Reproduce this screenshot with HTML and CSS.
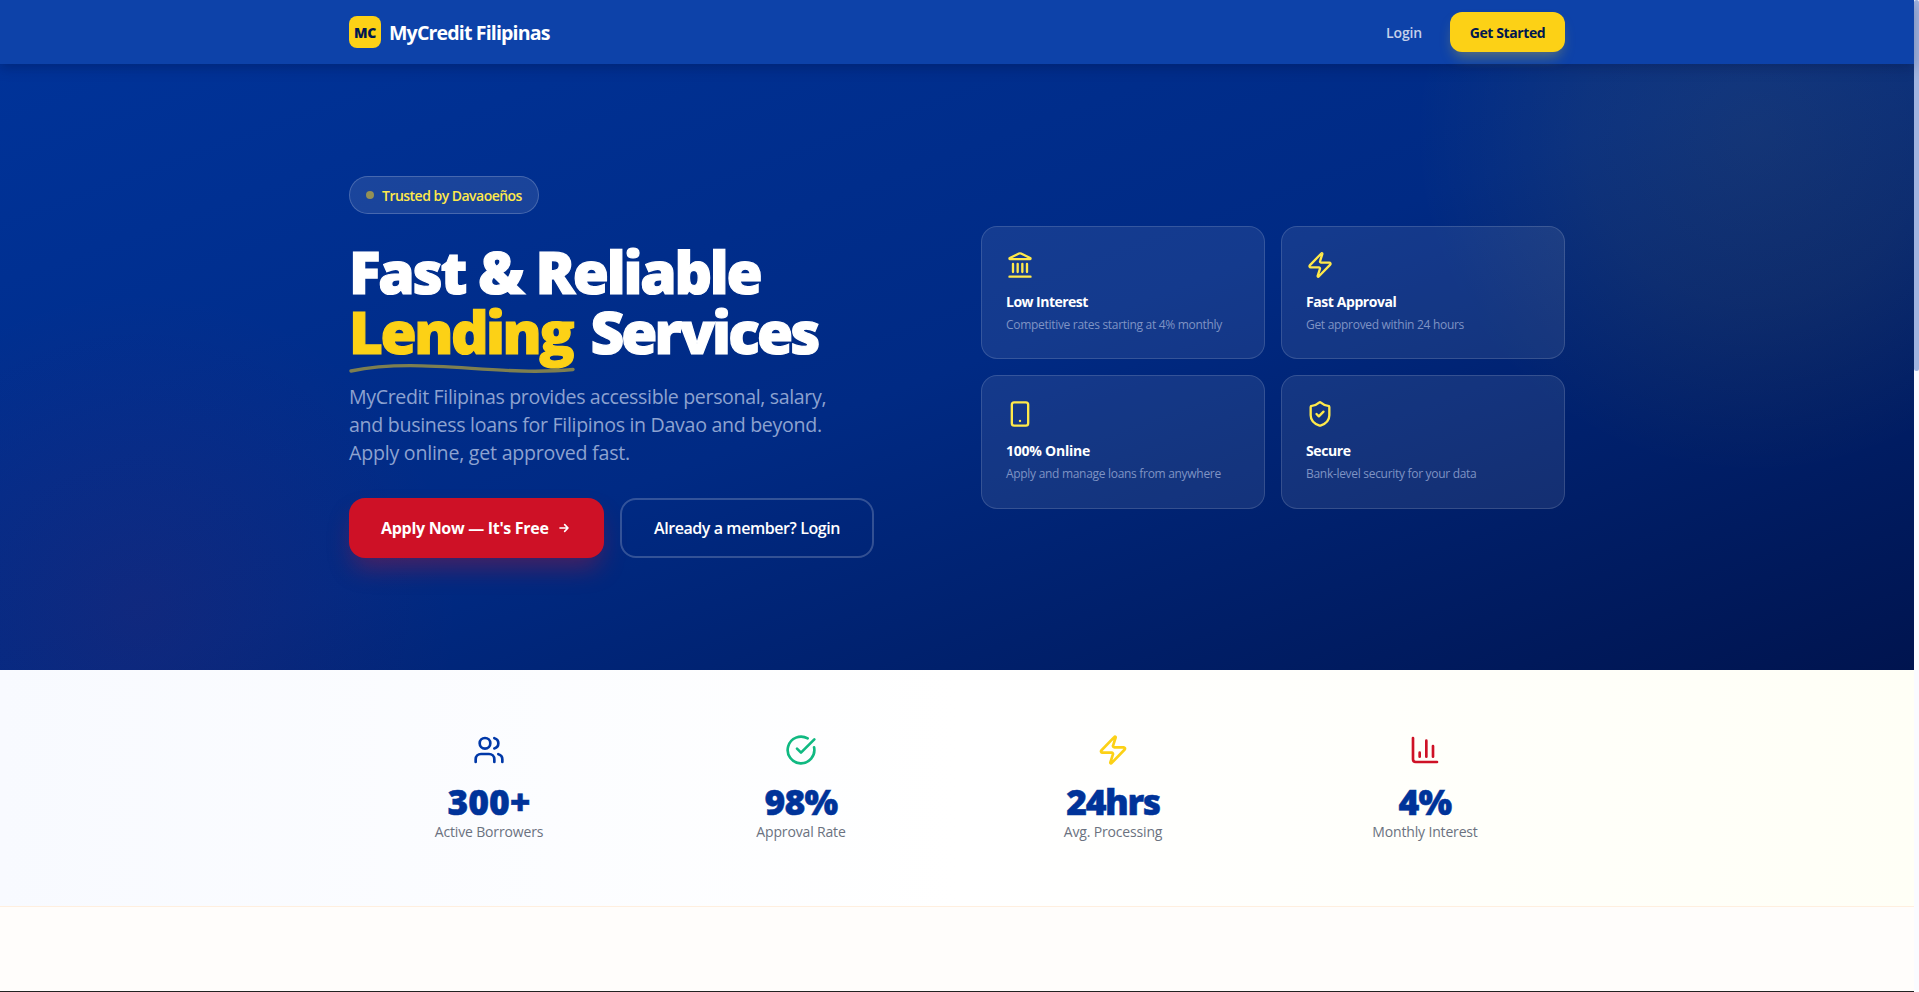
FILE: index.html
```html
<!DOCTYPE html>
<html lang="en">
<head>
<meta charset="utf-8">
<title>MyCredit Filipinas</title>
<link rel="stylesheet" href="styles.css">
</head>
<body>
<div class="page">
  <header class="nav">
    <div class="container nav-inner">
      <a class="brand"><span class="brand-mark">MC</span><span class="brand-name">MyCredit Filipinas</span></a>
      <nav class="nav-links"><a class="login">Login</a><a class="get-started">Get Started</a></nav>
    </div>
  </header>
  <main>
    <section class="hero">
      <div class="glow glow-gold"></div>
      <div class="glow glow-red"></div>
      <div class="container hero-inner">
        <div class="intro">
          <div class="badge"><i class="dot"></i><span>Trusted by Davaoeños</span></div>
          <h1 class="title"><span class="title-top">Fast &amp; Reliable</span><br><span class="lending">Lending<svg class="swoosh" viewBox="0 0 226 12" fill="none"><path d="M2 8C72 -6.5 148 14 224 6.5" stroke="currentColor" stroke-width="3.4" stroke-linecap="round"/></svg></span> <span class="services">Services</span></h1>
          <p class="lead"><span class="lead-1">MyCredit Filipinas provides accessible personal, salary,</span><br><span class="lead-2">and business loans for Filipinos in Davao and beyond.</span><br><span class="lead-3">Apply online, get approved fast.</span></p>
          <div class="actions">
            <a class="btn btn-red"><span>Apply Now — It's Free</span><svg class="arrow" viewBox="0 0 24 24"><path d="M13 7l5 5m0 0l-5 5m5-5H6"/></svg></a>
            <a class="btn btn-outline"><span>Already a member? Login</span></a>
          </div>
        </div>
        <div class="features">
          <article class="card">
            <svg class="card-icon" viewBox="0 0 24 24"><path d="M10 18v-7M11.12 2.198a2 2 0 0 1 1.76.006l7.866 3.847c.476.233.31.949-.22.949H3.474c-.53 0-.695-.716-.22-.949zM14 18v-7M18 18v-7M3 22h18M6 18v-7"/></svg>
            <h3 class="tight">Low Interest</h3><p>Competitive rates starting at 4% monthly</p>
          </article>
          <article class="card">
            <svg class="card-icon" viewBox="0 0 24 24"><path d="M4 14a1 1 0 0 1-.78-1.63l9.9-10.2a.5.5 0 0 1 .86.46l-1.92 6.02A1 1 0 0 0 13 10h7a1 1 0 0 1 .78 1.63l-9.9 10.2a.5.5 0 0 1-.86-.46l1.92-6.02A1 1 0 0 0 11 14z"/></svg>
            <h3>Fast Approval</h3><p>Get approved within 24 hours</p>
          </article>
          <article class="card">
            <svg class="card-icon" viewBox="0 0 24 24"><rect x="5" y="2" width="14" height="20" rx="2"/><path d="M12 18h.01"/></svg>
            <h3 class="loose">100% Online</h3><p>Apply and manage loans from anywhere</p>
          </article>
          <article class="card">
            <svg class="card-icon" viewBox="0 0 24 24"><path d="M20 13c0 5-3.5 7.5-7.66 8.95a1 1 0 0 1-.67-.01C7.5 20.5 4 18 4 13V6a1 1 0 0 1 1-1c2 0 4.5-1.2 6.24-2.72a1.17 1.17 0 0 1 1.52 0C14.51 3.81 17 5 19 5a1 1 0 0 1 1 1z"/><path d="m9 12 2 2 4-4"/></svg>
            <h3>Secure</h3><p>Bank-level security for your data</p>
          </article>
        </div>
      </div>
    </section>
    <section class="stats">
      <div class="container stats-grid">
        <div class="stat"><svg class="stat-icon blue" viewBox="0 0 24 24"><path d="M16 21v-2a4 4 0 0 0-4-4H6a4 4 0 0 0-4 4v2"/><circle cx="9" cy="7" r="4"/><path d="M22 21v-2a4 4 0 0 0-3-3.87M16 3.13a4 4 0 0 1 0 7.75"/></svg><div class="value">300+</div><div class="label">Active Borrowers</div></div>
        <div class="stat"><svg class="stat-icon green" viewBox="0 0 24 24"><path d="M21.801 10A10 10 0 1 1 17 3.335"/><path d="m9 11 3 3L22 4"/></svg><div class="value snug">98%</div><div class="label">Approval Rate</div></div>
        <div class="stat"><svg class="stat-icon gold" viewBox="0 0 24 24"><path d="M4 14a1 1 0 0 1-.78-1.63l9.9-10.2a.5.5 0 0 1 .86.46l-1.92 6.02A1 1 0 0 0 13 10h7a1 1 0 0 1 .78 1.63l-9.9 10.2a.5.5 0 0 1-.86-.46l1.92-6.02A1 1 0 0 0 11 14z"/></svg><div class="value snugger">24hrs</div><div class="label">Avg. Processing</div></div>
        <div class="stat"><svg class="stat-icon red" viewBox="0 0 24 24"><path d="M3 3v16a2 2 0 0 0 2 2h16M18 17V9M13 17V5M8 17v-3"/></svg><div class="value snug">4%</div><div class="label">Monthly Interest</div></div>
      </div>
    </section>
    <section class="next"></section>
  </main>
</div>
<div class="scrollbar"><div class="thumb"></div></div>
</body>
</html>
```
FILE: styles.css
```css
* { box-sizing: border-box; }
body {
  margin: 0;
  display: flex;
  height: 992px;
  overflow: hidden;
  font-family: "Open Sans", "Noto Sans", sans-serif;
  background: #fffdfb;
  color: #fff;
  white-space: nowrap;
}
svg { display: block; }
.page { width: 1914px; display: flex; flex-direction: column; }
main { display: flex; flex-direction: column; flex: 1; }
.container { width: 1280px; margin: 0 auto; padding: 0 32px; }

.nav { position: relative; z-index: 2; height: 64px; background: #0d42a9; box-shadow: 0 4px 12px rgba(0, 10, 50, .28); }
.nav-inner { height: 64px; display: flex; align-items: center; justify-content: space-between; }
.brand { display: flex; align-items: center; gap: 8px; }
.brand-mark { width: 32px; height: 32px; border-radius: 8px; background: #fcd116; color: #00174f; display: grid; place-items: center; font-size: 14px; font-weight: 800; letter-spacing: -.4px; }
.brand-name { font-size: 19.6px; font-weight: 700; letter-spacing: -.86px; }
.nav-links { display: flex; align-items: center; gap: 28px; }
.login { font-size: 14px; font-weight: 600; letter-spacing: -.15px; color: #c4d0ea; }
.get-started { width: 115px; height: 40px; border-radius: 12px; background: #fcd116; color: #00174f; display: grid; place-items: center; font-size: 14px; font-weight: 700; letter-spacing: -.4px; box-shadow: 0 8px 14px -4px rgba(252, 209, 22, .35); }

.hero { position: relative; overflow: hidden; height: 606px; padding: 112px 0; background: linear-gradient(160deg, #003399 0%, #002a84 50%, #00144f 100%); }
.glow { position: absolute; border-radius: 50%; }
.glow-gold { width: 680px; height: 680px; right: -180px; top: -270px; background: radial-gradient(closest-side, rgba(252, 209, 22, .08), rgba(252, 209, 22, .055) 50%, rgba(252, 209, 22, 0)); }
.glow-red { width: 640px; height: 640px; left: -180px; bottom: -260px; background: radial-gradient(closest-side, rgba(206, 17, 38, .08), rgba(206, 17, 38, 0)); }
.hero-inner { position: relative; display: grid; grid-template-columns: 584px 584px; gap: 48px; align-items: center; }
.badge { display: flex; align-items: center; gap: 8px; width: 190px; height: 38px; padding: 0 16px; border-radius: 19px; border: 1px solid rgba(255, 255, 255, .2); background: rgba(255, 255, 255, .1); color: #ffe94a; font-size: 14px; font-weight: 600; letter-spacing: -.52px; }
.dot { flex: none; width: 8px; height: 8px; border-radius: 50%; background: #939055; }
.title { margin: 27px 0 0; font-size: 58.5px; line-height: 60px; font-weight: 800; -webkit-text-stroke: 1.2px currentColor; }
.title-top { letter-spacing: -2.25px; }
.lending { position: relative; display: inline-block; color: #fcd116; letter-spacing: -2.5px; }
.services { margin-left: 3px; letter-spacing: -2.85px; }
.swoosh { position: absolute; left: 0; top: 62px; width: 226px; height: 12px; color: rgba(252, 209, 22, .5); }
.lead { margin: 22px 0 0; font-size: 19.6px; line-height: 28px; color: #8da2d0; }
.lead-1 { letter-spacing: -.36px; }
.lead-2 { letter-spacing: -.31px; }
.lead-3 { letter-spacing: -.23px; }
.actions { display: flex; gap: 16px; margin-top: 31px; }
.btn { height: 60px; border-radius: 16px; display: flex; align-items: center; font-size: 16px; }
.btn-red { width: 255px; padding: 0 32px; justify-content: space-between; background: #ce1126; font-weight: 700; letter-spacing: -.3px; box-shadow: 0 14px 24px -4px rgba(206, 17, 38, .35); }
.btn-outline { width: 254px; justify-content: center; border: 2px solid rgba(255, 255, 255, .2); font-weight: 600; letter-spacing: -.43px; }
.arrow { width: 16px; height: 16px; fill: none; stroke: #fff; stroke-width: 2.5; stroke-linecap: round; stroke-linejoin: round; }

.features { display: grid; grid-template-columns: 284px 284px; gap: 16px; }
.card { height: 133.5px; padding: 24px; border-radius: 16px; border: 1px solid rgba(255, 255, 255, .14); background: rgba(255, 255, 255, .08); }
.card-icon { width: 28px; height: 28px; fill: none; stroke: #ffe94a; stroke-width: 2; stroke-linecap: round; stroke-linejoin: round; }
.card h3 { margin: 13px 0 3px; font-size: 14px; line-height: 20px; font-weight: 700; letter-spacing: -.42px; }
.card h3.tight { letter-spacing: -.52px; }
.card h3.loose { letter-spacing: -.24px; }
.card p { margin: 0; font-size: 12px; line-height: 19.5px; letter-spacing: -.3px; color: #7f93c4; }

.stats { height: 237px; padding: 64px 0; border-bottom: 1px solid #ffefdf; background: linear-gradient(90deg, #f8faff, #fff 50%, #fffff6); }
.stats-grid { display: grid; grid-template-columns: repeat(4, 280px); gap: 32px; }
.stat { display: flex; flex-direction: column; align-items: center; }
.stat-icon { width: 32px; height: 32px; fill: none; stroke: currentColor; stroke-width: 2; stroke-linecap: round; stroke-linejoin: round; }
.blue { color: #0038a8; }
.green { color: #10b981; }
.gold { color: #fcd116; }
.red { color: #ce1126; }
.value { margin-top: 14.6px; font-size: 35.5px; line-height: 40px; font-weight: 800; color: #003399; -webkit-text-stroke: .5px currentColor; }
.snug { letter-spacing: -.8px; }
.snugger { letter-spacing: -1.4px; }
.label { margin-top: 1.4px; font-size: 14px; line-height: 20px; font-weight: 500; letter-spacing: -.16px; color: #6b7280; }
.next { flex: 1; border-bottom: 1px solid #222; }
.scrollbar { width: 5px; background: #fafbff; }
.thumb { height: 371px; background: #a0b4e0; border-radius: 3px; }
```
